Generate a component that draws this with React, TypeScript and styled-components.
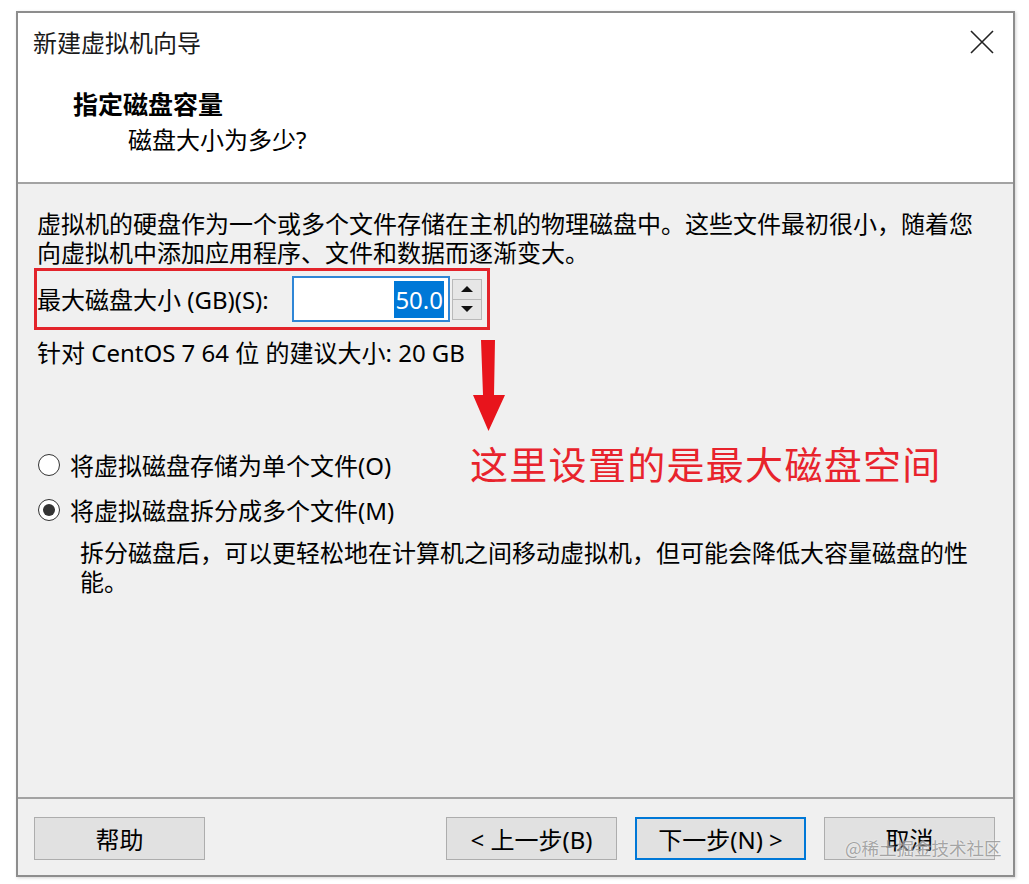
import React from "react";
import styled, { createGlobalStyle } from "styled-components";

const FONT = `"Segoe UI", "Noto Sans", "Noto Sans CJK SC", sans-serif`;
const CJK = `"Noto Sans CJK SC", sans-serif`;

const Global = createGlobalStyle`
  html, body { margin: 0; padding: 0; background: #ffffff; }
  body { font-family: ${FONT}; color: #000; }
  * { box-sizing: border-box; }
`;

const Page = styled.div`
  position: relative;
  width: 1029px;
  height: 884px;
  padding: 11px 0 0 16px;
  overflow: hidden;
`;

const Dialog = styled.div`
  position: relative;
  width: 999px;
  height: 866px;
  border: 2px solid #8d8d8d;
  box-shadow: 1px 1px 3px rgba(0, 0, 0, 0.18);
  background: #f0f0f0;
  display: flex;
  flex-direction: column;
`;

const Header = styled.div`
  height: 171px;
  background: #ffffff;
  border-bottom: 2px solid #a3a3a3;
  display: flex;
  flex-direction: column;
  flex-shrink: 0;
`;

const TitleRow = styled.div`
  display: flex;
  align-items: center;
  justify-content: space-between;
  padding: 13px 19px 0 15px;
  height: 45px;
  font-size: 24px;
  line-height: 32px;
  color: #1a1a1a;
  font-family: ${CJK};
`;

const CloseButton = styled.div`
  width: 24px;
  height: 24px;
  display: flex;
  align-items: center;
  justify-content: center;
`;

const Heading = styled.div`
  margin-top: 29px;
  padding-left: 55px;
  font-size: 25px;
  line-height: 32px;
  font-weight: 700;
  font-family: ${CJK};
`;

const SubHeading = styled.div`
  margin-top: 5px;
  padding-left: 110px;
  font-size: 24px;
  line-height: 32px;
  font-family: ${FONT};
`;

const Body = styled.div`
  position: relative;
  flex: 1;
  padding: 25px 0 0 19px;
  font-size: 24px;
  line-height: 29px;
`;

const Paragraph = styled.p`
  margin: 0;
  width: 950px;
`;

const Highlight = styled.div`
  margin: 1px 0 0 -3px;
  width: 456px;
  height: 62px;
  border: 3px solid #e3242b;
  display: flex;
  align-items: center;
  padding-right: 5px;
`;

const Label = styled.span`
  white-space: nowrap;
`;

const NumberBox = styled.div`
  margin-left: auto;
  width: 158px;
  height: 46px;
  border: 2px solid #2f86d6;
  background: #ffffff;
  display: flex;
  align-items: center;
  justify-content: flex-end;
  padding-right: 4px;
`;

const Selected = styled.span`
  background: #0078d7;
  color: #ffffff;
  line-height: 37px;
  padding: 0 1px;
`;

const Spinner = styled.div`
  margin-left: 2px;
  width: 30px;
  height: 41px;
  display: flex;
  flex-direction: column;
  border: 1px solid #b9b9b9;
  background: #e6e6e6;
`;

const SpinHalf = styled.div<{ $top?: boolean }>`
  flex: 1;
  display: flex;
  align-items: center;
  justify-content: center;
  border-bottom: ${(p) => (p.$top ? "1px solid #b9b9b9" : "none")};
`;

const Triangle = styled.div<{ $up?: boolean }>`
  width: 0;
  height: 0;
  border-left: 6px solid transparent;
  border-right: 6px solid transparent;
  ${(p) =>
    p.$up ? "border-bottom: 6px solid #111;" : "border-top: 6px solid #111;"}
`;

const Recommend = styled.div`
  margin-top: 8px;
  line-height: 30px;
`;

const RadioGroup = styled.div`
  margin-top: 82px;
  display: flex;
  flex-direction: column;
  gap: 15px;
`;

const RadioRow = styled.label`
  display: flex;
  align-items: center;
  height: 30px;
  padding-left: 1px;
`;

const RadioCircle = styled.span<{ $checked?: boolean }>`
  width: 22px;
  height: 22px;
  border-radius: 50%;
  border: 1.5px solid #333;
  background: #fff;
  margin-right: 10px;
  display: flex;
  align-items: center;
  justify-content: center;
  flex-shrink: 0;
  &::after {
    content: "";
    width: 12px;
    height: 12px;
    border-radius: 50%;
    background: ${(p) => (p.$checked ? "#333" : "transparent")};
  }
`;

const Description = styled.p`
  margin: 13px 0 0 43px;
  width: 900px;
`;

const Annotation = styled.div`
  position: absolute;
  left: 452px;
  top: 257px;
  font-family: ${CJK};
  font-size: 38px;
  line-height: 44px;
  letter-spacing: 1.3px;
  color: #e8232c;
`;

const ArrowMark = styled.svg`
  position: absolute;
  left: 452px;
  top: 154px;
`;

const Footer = styled.div`
  height: 78px;
  flex-shrink: 0;
  border-top: 2px solid #a3a3a3;
  padding: 18px 18px 0 16px;
  display: flex;
  justify-content: space-between;
  align-items: flex-start;
`;

const ButtonGroup = styled.div`
  display: flex;
  gap: 18px;
`;

const Button = styled.button<{ $default?: boolean }>`
  width: 171px;
  height: 43px;
  background: #e1e1e1;
  border: ${(p) => (p.$default ? "2px solid #0078d7" : "1px solid #adadad")};
  font-family: ${FONT};
  font-size: 24px;
  color: #000;
  padding: 0;
  display: flex;
  align-items: center;
  justify-content: center;
`;

const Watermark = styled.div`
  position: absolute;
  left: 845px;
  top: 836px;
  font-family: ${CJK};
  font-size: 17.5px;
  line-height: 24px;
  color: rgba(130, 130, 130, 0.7);
  text-shadow: 0 0 2px rgba(255, 255, 255, 0.9);
  white-space: nowrap;
`;

export default function App() {
  return (
    <>
      <Global />
      <Page>
        <Dialog>
          <Header>
            <TitleRow>
              <span>新建虚拟机向导</span>
              <CloseButton>
                <svg width="24" height="24" viewBox="0 0 24 24">
                  <path
                    d="M1 1 L23 23 M23 1 L1 23"
                    stroke="#222"
                    strokeWidth="1.6"
                    fill="none"
                  />
                </svg>
              </CloseButton>
            </TitleRow>
            <Heading>指定磁盘容量</Heading>
            <SubHeading>磁盘大小为多少?</SubHeading>
          </Header>

          <Body>
            <Paragraph>
              虚拟机的硬盘作为一个或多个文件存储在主机的物理磁盘中。这些文件最初很小，随着您向虚拟机中添加应用程序、文件和数据而逐渐变大。
            </Paragraph>
            <Highlight>
              <Label>最大磁盘大小 (GB)(S):</Label>
              <NumberBox>
                <Selected>50.0</Selected>
              </NumberBox>
              <Spinner>
                <SpinHalf $top>
                  <Triangle $up />
                </SpinHalf>
                <SpinHalf>
                  <Triangle />
                </SpinHalf>
              </Spinner>
            </Highlight>
            <Recommend>针对 CentOS 7 64 位 的建议大小: 20 GB</Recommend>

            <RadioGroup>
              <RadioRow>
                <RadioCircle />
                将虚拟磁盘存储为单个文件(O)
              </RadioRow>
              <RadioRow>
                <RadioCircle $checked />
                将虚拟磁盘拆分成多个文件(M)
              </RadioRow>
            </RadioGroup>
            <Description>
              拆分磁盘后，可以更轻松地在计算机之间移动虚拟机，但可能会降低大容量磁盘的性能。
            </Description>

            <ArrowMark width="38" height="96" viewBox="0 0 38 96">
              <polygon
                points="11,2 25,2 24,57 35,57 18.5,93 3,57 13,57"
                fill="#e8141c"
              />
            </ArrowMark>
            <Annotation>这里设置的是最大磁盘空间</Annotation>
          </Body>

          <Footer>
            <Button>帮助</Button>
            <ButtonGroup>
              <Button>&lt; 上一步(B)</Button>
              <Button $default>下一步(N) &gt;</Button>
              <Button>取消</Button>
            </ButtonGroup>
          </Footer>
        </Dialog>
        <Watermark>@稀土掘金技术社区</Watermark>
      </Page>
    </>
  );
}
